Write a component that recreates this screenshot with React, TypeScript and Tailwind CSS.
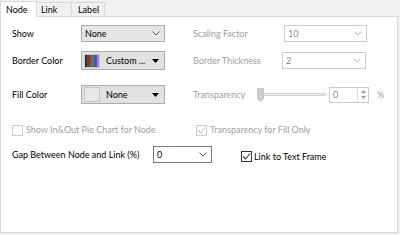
import type { ReactNode } from 'react'

const font = { fontFamily: 'Lato, "Open Sans", sans-serif' }

function Chevron({ disabled }: { disabled?: boolean }) {
  return (
    <svg width="8" height="5" viewBox="0 0 8 5" fill="none">
      <path d="M0.5 0.5L4 4L7.5 0.5" stroke={disabled ? '#b8b8b8' : '#606060'} strokeWidth="1" />
    </svg>
  )
}

function Tri() {
  return (
    <svg width="7" height="4" viewBox="0 0 7 4" fill="#000">
      <path d="M0 0H7L3.5 4Z" />
    </svg>
  )
}

function Combo({
  value,
  width,
  disabled,
  gray,
  h = 'h-[17px]',
}: {
  value: string
  width: string
  disabled?: boolean
  gray?: boolean
  h?: string
}) {
  const base = gray
    ? 'bg-[#e5e5e5] border-[#adadad] text-black'
    : disabled
      ? 'bg-white border-[#cccccc] text-[#8a8a8a]'
      : 'bg-white border-[#7a7a7a] text-black'
  return (
    <div className={`${width} ${h} ${base} border flex items-center justify-between pl-[3px] pr-[4px]`}>
      <span>{value}</span>
      <Chevron disabled={disabled} />
    </div>
  )
}

function ColorCombo({ label, children }: { label: string; children: ReactNode }) {
  return (
    <div className="w-[84px] h-[19px] bg-[#e1e1e1] border border-[#adadad] flex items-center pl-[2px] pr-[5px]">
      {children}
      <span className="ml-[6px] flex-1">{label}</span>
      <Tri />
    </div>
  )
}

function CheckBox({ checked, disabled }: { checked?: boolean; disabled?: boolean }) {
  const c = disabled ? '#c2c2c2' : '#333333'
  return (
    <div
      className={`w-[11px] h-[11px] border bg-white flex items-center justify-center ${disabled ? 'border-[#cccccc]' : 'border-[#333333]'}`}
    >
      {checked && (
        <svg width="9" height="9" viewBox="0 0 9 9" fill="none">
          <path d="M1 4.5L3.5 7L8 1.5" stroke={c} strokeWidth="1.1" />
        </svg>
      )}
    </div>
  )
}

export default function App() {
  return (
    <div className="w-[400px] h-[235px] bg-[#f0f0f0] text-[9px] text-black overflow-hidden whitespace-nowrap" style={font}>
      <div className="flex h-[16px] items-end">
        <div className="w-[37px] h-[16px] bg-white border border-b-0 border-[#d9d9d9] flex items-center pl-[5px] relative z-10 -mb-px">
          Node
        </div>
        <div className="w-[35px] h-[14px] bg-[#f0f0f0] border border-l-0 border-b-0 border-[#d9d9d9] flex items-center pl-[4px]">
          Link
        </div>
        <div className="w-[33px] h-[14px] bg-[#f0f0f0] border border-l-0 border-b-0 border-[#d9d9d9] flex items-center pl-[6px]">
          Label
        </div>
      </div>
      <div className="w-[398px] h-[217px] bg-white border border-[#d9d9d9] pl-[11px] pt-[8px]">
        <div className="flex items-center h-[17px]">
          <span className="w-[69px]">Show</span>
          <Combo value="None" width="w-[84px]" gray />
          <span className="ml-[28px] w-[91px] text-[#a0a0a0]">Scaling Factor</span>
          <Combo value="10" width="w-[83px]" disabled />
        </div>
        <div className="flex items-center h-[19px] mt-[9px]">
          <span className="w-[69px]">Border Color</span>
          <ColorCombo label="Custom ...">
            <div className="w-[16px] h-[14px] flex border border-[#c8c8c8]">
              <div className="flex-1 bg-[#303030]" />
              <div className="flex-1 bg-[#505050]" />
              <div className="flex-1 bg-[#d83030]" />
              <div className="flex-1 bg-[#2f9a4a]" />
              <div className="flex-1 bg-[#3d55c8]" />
              <div className="flex-1 bg-[#b27ad8]" />
            </div>
          </ColorCombo>
          <span className="ml-[28px] w-[89px] text-[#a0a0a0]">Border Thickness</span>
          <Combo value="2" width="w-[84px]" disabled />
        </div>
        <div className="flex items-center h-[19px] mt-[15px]">
          <span className="w-[69px]">Fill Color</span>
          <ColorCombo label="None">
            <div className="w-[16px] h-[15px] bg-[#e8e8e8] border border-[#c4c4c4]" />
          </ColorCombo>
          <span className="ml-[28px] w-[64px] text-[#a0a0a0]">Transparency</span>
          <div className="flex items-center w-[72px]">
            <svg width="7" height="14" viewBox="0 0 7 14">
              <path d="M0.5 0.5H6.5V11L3.5 13.5L0.5 11Z" fill="#cdcdcd" stroke="#c2c2c2" />
            </svg>
            <div className="w-[62px] h-[3px] bg-[#e6e6e6] border-y border-[#d6d6d6]" />
          </div>
          <div className="w-[40px] h-[16px] border border-[#cccccc] flex">
            <span className="flex-1 pl-[3px] text-[#8a8a8a] leading-[14px]">0</span>
            <div className="w-[11px] border-l border-[#dddddd] flex flex-col items-center justify-center gap-[3px]">
              <svg width="5" height="3" viewBox="0 0 5 3" fill="#9a9a9a">
                <path d="M0 3H5L2.5 0Z" />
              </svg>
              <svg width="5" height="3" viewBox="0 0 5 3" fill="#9a9a9a">
                <path d="M0 0H5L2.5 3Z" />
              </svg>
            </div>
          </div>
          <span className="ml-[8px] text-[#a0a0a0]">%</span>
        </div>
        <div className="flex items-center h-[12px] mt-[20px]">
          <div className="w-[184px] flex items-center gap-[3px] text-[#a0a0a0]">
            <CheckBox disabled />
            <span>Show In&amp;Out Pie Chart for Node</span>
          </div>
          <div className="flex items-center gap-[3px] text-[#a0a0a0]">
            <CheckBox disabled checked />
            <span>Transparency for Fill Only</span>
          </div>
        </div>
        <div className="flex items-center h-[17px] mt-[10px]">
          <span className="w-[141px]">Gap Between Node and Link (%)</span>
          <Combo value="0" width="w-[59px]" />
          <div className="ml-[29px] flex items-center gap-[2px] mt-[4px]">
            <CheckBox checked />
            <span>Link to Text Frame</span>
          </div>
        </div>
      </div>
    </div>
  )
}
